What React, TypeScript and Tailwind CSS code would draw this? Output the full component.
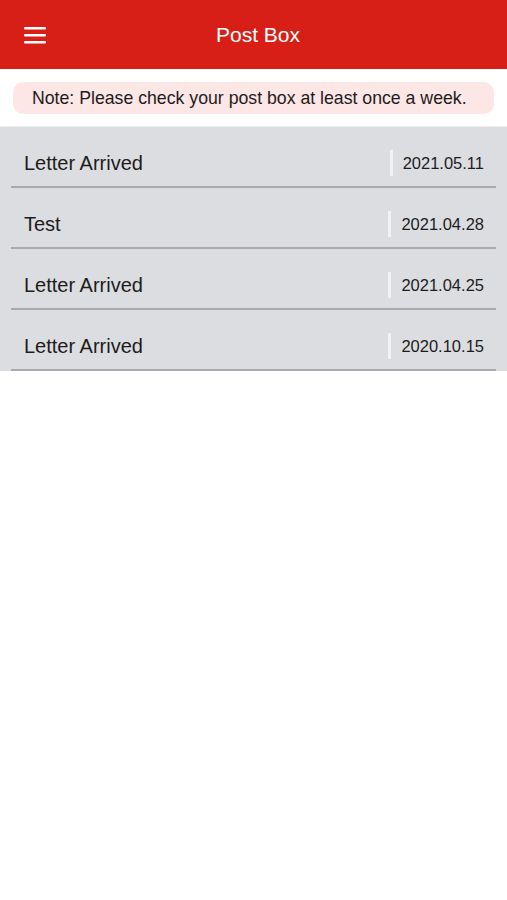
import React from "react";

interface PostItem {
    title: string;
    date: string;
}

const items: PostItem[] = [
    { title: "Letter Arrived", date: "2021.05.11" },
    { title: "Test", date: "2021.04.28" },
    { title: "Letter Arrived", date: "2021.04.25" },
    { title: "Letter Arrived", date: "2020.10.15" },
];

const MenuIcon = () => (
    <svg width="22" height="17" viewBox="0 0 22 17" fill="none">
        <rect x="0" y="0" width="22" height="2.6" rx="1" fill="#fff" />
        <rect x="0" y="7" width="22" height="2.6" rx="1" fill="#fff" />
        <rect x="0" y="14" width="22" height="2.6" rx="1" fill="#fff" />
    </svg>
);

const PostRow: React.FC<PostItem> = ({ title, date }) => {
    return (
        <li className="mx-[11px] h-[61px] pt-[13px] flex items-center border-b-2 border-[#a9aaad]">
            <span className="flex-1 pl-[13px] text-[20px] text-[#1c1c1c]">{title}</span>
            <div className="flex items-center pr-[12px]">
                <span className="w-[3px] h-[26px] bg-[#f2f2f3] mr-[10px]"></span>
                <span className="text-[16.5px] text-[#1c1c1c]">{date}</span>
            </div>
        </li>
    );
};

export default function App() {
    return (
        <div
            className="w-[507px] min-h-[900px] bg-white"
            style={{ fontFamily: '"Helvetica Neue", "Liberation Sans", Arial, sans-serif' }}
        >
            <header className="relative h-[69px] bg-[#d71f17] flex items-center justify-center">
                <button className="absolute left-[24px] top-[27px]">
                    <MenuIcon />
                </button>
                <h1 className="text-white text-[21px] pt-[1px] pl-[9px]">Post Box</h1>
            </header>
            <div className="px-[13px] pt-[13px] pb-[12px] border-b border-[#ececec]">
                <div className="h-[32px] rounded-[10px] bg-[#fde6e6] flex items-center pl-[19px] text-[17.7px] text-[#1c1c1c]">
                    Note: Please check your post box at least once a week.
                </div>
            </div>
            <ul className="bg-[#dcdde0]">
                {items.map((item, i) => (
                    <PostRow key={i} title={item.title} date={item.date} />
                ))}
            </ul>
        </div>
    );
}
